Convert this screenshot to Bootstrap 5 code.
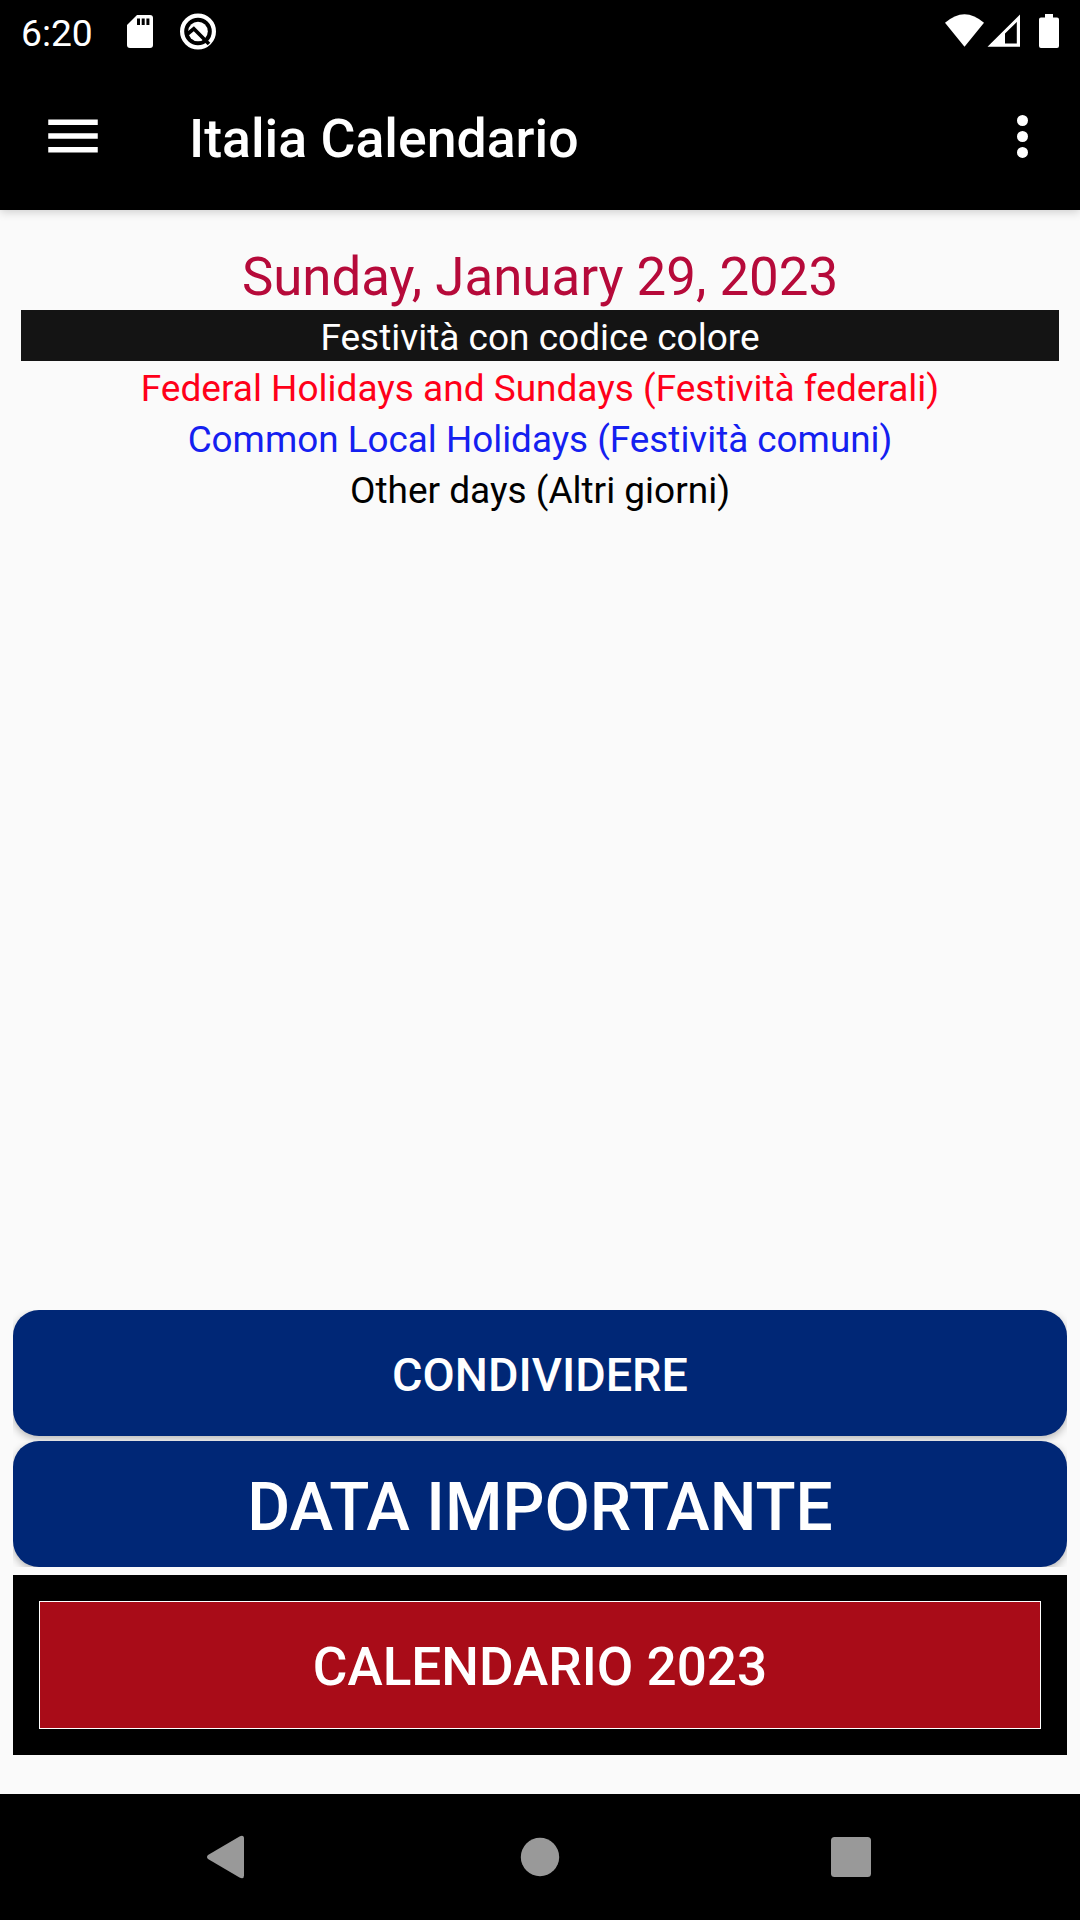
<!DOCTYPE html>
<html lang="it">
<head>
<meta charset="utf-8">
<meta name="viewport" content="width=device-width, initial-scale=1">
<title>Italia Calendario</title>
<link href="https://cdn.jsdelivr.net/npm/bootstrap@5.3.0/dist/css/bootstrap.min.css" rel="stylesheet">
<style>
  body { font-family: Roboto, "Liberation Sans", sans-serif; background: #fafafa; color: #000; }
  .screen { width: 1080px; height: 1920px; }
  svg { display: block; flex: none; }
  .status-bar { height: 66px; padding: 0 21px; }
  .status-icons { height: 66px; }
  .clock { font-size: 37.2px; line-height: 66px; width: 70px; white-space: nowrap; }
  .app-bar { height: 144px; padding: 0 21px 4px 40px; box-shadow: 0 2px 9px rgba(0,0,0,.18); z-index: 1; }
  .app-title { font-size: 53.6px; font-weight: 500; line-height: 66px; margin-left: 83px; padding-top: 6px; }
  .icon-btn { width: 66px; height: 66px; }
  .content-area { padding: 27px 13px 39px; }
  .legend { margin: 0 8px; }
  .today { font-size: 52.8px; line-height: 65px; height: 73px; padding-top: 8px; color: #b60a3a; }
  .legend-line { font-size: 37px; line-height: 47px; height: 51px; padding-top: 4px; }
  .legend-head { background: #141414; color: #fff; }
  .legend-federal { color: #ff0019; }
  .legend-local { color: #1420f0; font-size: 36.85px; }
  .blue-wrap { overflow: hidden; height: 131px; }
  .blue-wrap.last { height: 126px; margin-bottom: 8px; }
  .btn-blue { height: 126px; border: 0; border-radius: 26px; background: #002776; color: #fff; box-shadow: 0 3px 8px rgba(0,0,0,.28); font-weight: 500; }
  .size-share { font-size: 46.75px; padding: 4px 0 0; }
  .size-date { font-size: 65.8px; padding: 8px 0 0; }
  .year-frame { height: 180px; padding: 26px; background: #000; }
  .btn-year { height: 128px; border: 1px solid #fff; border-radius: 0; background: #a90c18; color: #fff; font-size: 53.1px; font-weight: 500; padding: 6px 0 0; }
  .nav-keys { height: 126px; }
</style>
</head>
<body>
<div class="screen d-flex flex-column overflow-hidden">
  <div class="status-bar bg-black text-white d-flex align-items-center justify-content-between">
    <div class="d-flex align-items-center">
      <span class="clock">6:20</span>
      <svg class="ms-3" width="120" height="66" viewBox="107 0 120 66" fill="#fff">
        <path d="M137 15H150Q153 15 153 18V45Q153 48 150 48H130Q127 48 127 45V25Z"/>
        <path fill="#000" d="M137 18.500h3v6.500h-3zM141.700 18.500h3v6.500h-3zM146.400 18.500h3v6.500h-3z"/>
        <circle cx="198" cy="31.500" r="15.900" fill="none" stroke="#fff" stroke-width="4.200"/>
        <circle cx="198" cy="31.500" r="9.800"/>
        <path d="M187.500 34L193.800 28.800L209 44" fill="none" stroke="#000" stroke-width="3.600"/>
      </svg>
    </div>
    <svg class="status-icons" width="115" height="66" viewBox="944 0 115 66" fill="#fff">
      <path d="M945 22.800Q964.500 5.500 984 22.800L964.500 46.700Z"/>
      <path fill-rule="evenodd" d="M987.500 46.800L1020 14.500V46.800ZM1005 33.500V43.500H1016.800V22Z"/>
      <path d="M1045 14h8v3.500h4q2 0 2 2V46q0 2-2 2h-16q-2 0-2-2V19.500q0-2 2-2h4z"/>
    </svg>
  </div>
  <nav class="app-bar bg-black text-white d-flex align-items-center flex-shrink-0 position-relative">
    <svg class="icon-btn" viewBox="0 0 66 66" fill="#fff"><path d="M8.250 16.400h49.500v5.500H8.250zM8.250 30.200h49.500v5.500H8.250zM8.250 44h49.500v5.500H8.250z"/></svg>
    <span class="app-title">Italia Calendario</span>
    <svg class="ms-auto" width="74" height="66" viewBox="985 103 74 66" fill="#fff"><circle cx="1022.500" cy="120.500" r="5.500"/><circle cx="1022.500" cy="136.500" r="5.500"/><circle cx="1022.500" cy="152.400" r="5.500"/></svg>
  </nav>
  <main class="content-area flex-grow-1 d-flex flex-column">
    <section class="legend text-center">
      <div class="today">Sunday, January 29, 2023</div>
      <div class="legend-line legend-head">Festività con codice colore</div>
      <div class="legend-line legend-federal">Federal Holidays and Sundays (Festività federali)</div>
      <div class="legend-line legend-local">Common Local Holidays (Festività comuni)</div>
      <div class="legend-line">Other days (Altri giorni)</div>
    </section>
    <section class="mt-auto">
      <div class="blue-wrap"><button type="button" class="btn btn-blue size-share w-100">CONDIVIDERE</button></div>
      <div class="blue-wrap last"><button type="button" class="btn btn-blue size-date w-100">DATA IMPORTANTE</button></div>
      <div class="year-frame"><button type="button" class="btn btn-year w-100">CALENDARIO 2023</button></div>
    </section>
  </main>
  <div class="nav-keys bg-black flex-shrink-0">
    <svg width="1080" height="126" viewBox="0 1794 1080 126" fill="#999">
      <path d="M208 1855L239.500 1836.400Q244 1834.500 244 1838.500V1875.500Q244 1879.500 239.500 1877.600L208 1859Q206 1857 208 1855Z"/>
      <circle cx="540" cy="1857" r="19.200"/>
      <rect x="831" y="1837" width="40" height="40" rx="3.500"/>
    </svg>
  </div>
</div>
<script src="https://cdn.jsdelivr.net/npm/bootstrap@5.3.0/dist/js/bootstrap.bundle.min.js"></script>
</body>
</html>
